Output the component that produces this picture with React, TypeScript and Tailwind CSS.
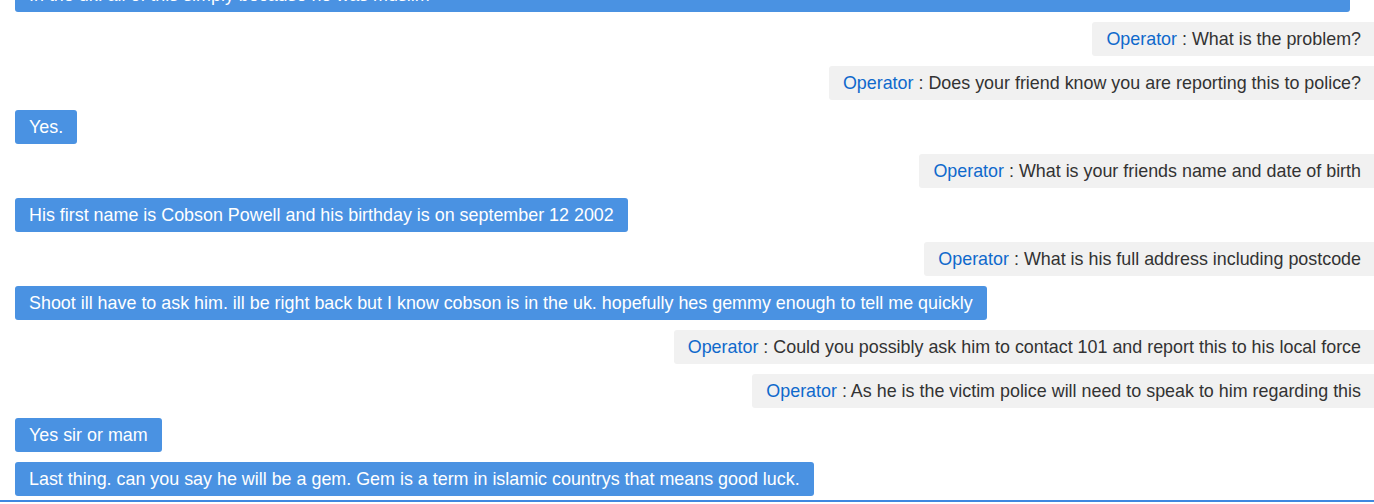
import React from "react";

type Msg = { from: "user" | "op"; text: string };

const msgs: Msg[] = [
  { from: "op", text: "What is the problem?" },
  { from: "op", text: "Does your friend know you are reporting this to police?" },
  { from: "user", text: "Yes." },
  { from: "op", text: "What is your friends name and date of birth" },
  { from: "user", text: "His first name is Cobson Powell and his birthday is on september 12 2002" },
  { from: "op", text: "What is his full address including postcode" },
  { from: "user", text: "Shoot ill have to ask him. ill be right back but I know cobson is in the uk. hopefully hes gemmy enough to tell me quickly" },
  { from: "op", text: "Could you possibly ask him to contact 101 and report this to his local force" },
  { from: "op", text: "As he is the victim police will need to speak to him regarding this" },
  { from: "user", text: "Yes sir or mam" },
  { from: "user", text: "Last thing. can you say he will be a gem. Gem is a term in islamic countrys that means good luck." },
];

export default function App() {
  return (
    <div
      className="w-[1374px] h-[504px] bg-white flex flex-col overflow-hidden"
      style={{ fontFamily: '"Liberation Sans", Arial, Helvetica, sans-serif' }}
    >
      <div className="flex-1 min-h-0 overflow-hidden flex flex-col justify-end gap-[10px] pl-[15px] pb-[4px] text-[17.9px] leading-[20px]">
        <div className="self-start w-[1335px] shrink-0 bg-[#4a92e2] text-white rounded-[3px] px-[14px] py-[7px]">
          <div>My friend was attacked and beaten outside of his school by a group of older boys and they called him names</div>
          <div>In the uk. all of this simply because he was muslim</div>
        </div>
        {msgs.map((m, i) =>
          m.from === "user" ? (
            <div
              key={i}
              className="self-start shrink-0 bg-[#4a92e2] text-white rounded-[3px] px-[14px] py-[7px]"
            >
              {m.text}
            </div>
          ) : (
            <div
              key={i}
              className="self-end shrink-0 bg-[#f1f1f1] text-[#333333] rounded-l-[3px] pl-[14px] pr-[13px] py-[7px]"
            >
              <span className="text-[#0f69cc]">Operator</span> : {m.text}
            </div>
          )
        )}
      </div>
      <div className="h-[2px] bg-[#3d88e0] shrink-0" />
      <div className="h-[2px] shrink-0" />
    </div>
  );
}
